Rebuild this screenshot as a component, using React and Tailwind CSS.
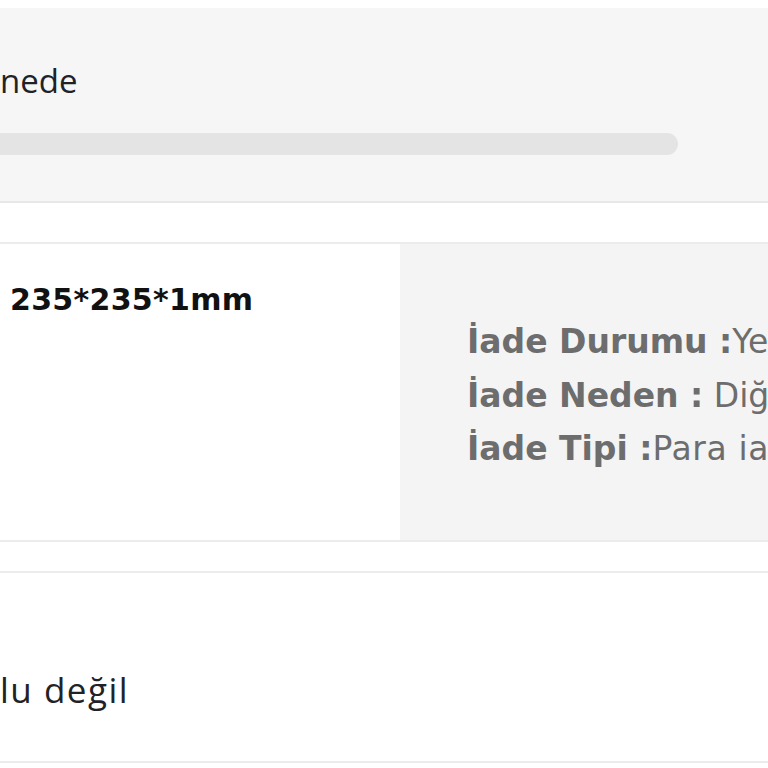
export default function App() {
  const open = { fontFamily: '"Open Sans", "Noto Sans", sans-serif' };
  const dv = { fontFamily: '"DejaVu Sans", "Noto Sans", sans-serif' };
  return (
    <div className="w-[768px] h-[768px] bg-white overflow-hidden">
      <div className="h-[8px] bg-white" />
      <section className="h-[195px] bg-[#f6f6f6] border-b-2 border-[#e8e8e8] pt-[56px]">
        <div style={open} className="text-[33px] leading-[33px] text-[#1f2328] whitespace-nowrap">nede</div>
        <div className="mt-[36px] h-[22px] w-[678px] rounded-r-full bg-[#e4e4e4]" />
      </section>
      <div className="h-[41px] bg-white border-b-2 border-[#ececec]" />
      <section className="flex h-[298px] border-b-2 border-[#ececec]">
        <div className="w-[400px] bg-white pt-[41px] pl-[10px]">
          <div style={dv} className="text-[30px] leading-[30px] font-bold tracking-[0.3px] text-[#111111] whitespace-nowrap">235*235*1mm</div>
        </div>
        <div className="flex-1 bg-[#f4f4f4] pt-[71px] pl-[67px] overflow-hidden">
          <div style={dv} className="text-[33px] leading-[53.5px] text-[#6d6d6d] whitespace-nowrap">
            <div><span className="font-bold">İade Durumu :</span>Yeni talep</div>
            <div><span className="font-bold">İade Neden :</span> Diğer</div>
            <div><span className="font-bold">İade Tipi :</span><span className="tracking-[0.6px]">Para iadesi</span></div>
          </div>
        </div>
      </section>
      <div className="h-[31px] bg-white border-b-2 border-[#ececec]" />
      <section className="h-[190px] bg-white border-b-2 border-[#ececec] pt-[99px]">
        <div style={open} className="text-[35px] leading-[35px] tracking-[1.5px] text-[#1f2328] whitespace-nowrap">lu değil</div>
      </section>
    </div>
  );
}
